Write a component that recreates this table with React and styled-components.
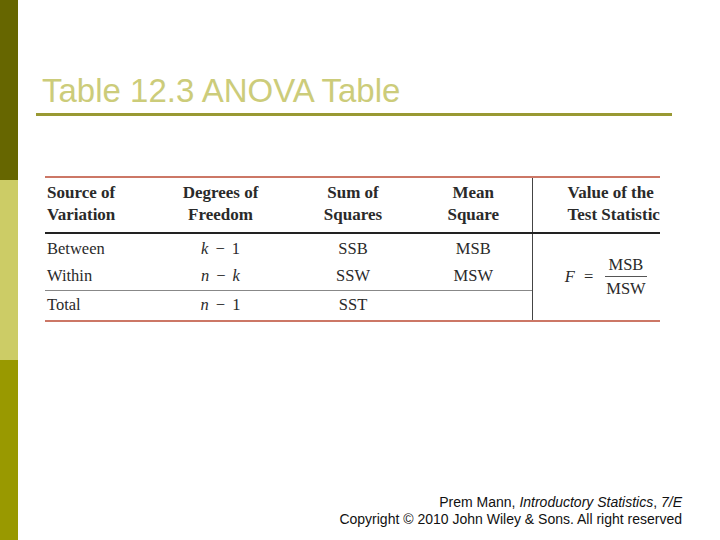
import React from 'react';
import styled, { createGlobalStyle } from 'styled-components';

const GlobalStyle = createGlobalStyle`
  html, body {
    margin: 0;
    padding: 0;
    background: #ffffff;
  }
  #root {
    width: 720px;
    height: 540px;
  }
`;

const Slide = styled.div`
  width: 720px;
  height: 540px;
  display: flex;
  background: #ffffff;
  overflow: hidden;
`;

const SideBar = styled.div`
  width: 18px;
  display: flex;
  flex-direction: column;
  flex-shrink: 0;
`;

const SideBlock = styled.div`
  height: 180px;
  background: ${(p) => p.$color};
`;

const Content = styled.div`
  box-sizing: border-box;
  width: 702px;
  display: flex;
  flex-direction: column;
  padding: 71px 48px 0 18px;
`;

const Title = styled.h1`
  margin: 0 0 0 6px;
  font-family: 'Liberation Sans', Arial, sans-serif;
  font-weight: normal;
  font-size: 33px;
  line-height: 40px;
  color: #cccc7a;
`;

const TitleRule = styled.div`
  height: 3px;
  margin: 2px 0 0 0;
  background: #999933;
`;

const TableWrap = styled.div`
  margin: 60px 0 0 9px;
  width: 615px;
`;

const Table = styled.table`
  width: 615px;
  table-layout: fixed;
  border-collapse: collapse;
  font-family: 'Liberation Serif', 'Times New Roman', serif;
  font-size: 16.5px;
  color: #2a2a2a;
  border-top: 2px solid #cc7766;
  border-bottom: 2px solid #cc7766;
`;

const Th = styled.th`
  box-sizing: border-box;
  font-weight: bold;
  font-size: 17px;
  line-height: 22px;
  padding: 4px 0 6px;
  text-align: ${(p) => p.$align || 'center'};
  padding-left: ${(p) => p.$pl || 0}px;
  border-bottom: 2px solid #222222;
  border-left: ${(p) => (p.$divider ? '1.5px solid #444444' : 'none')};
  width: ${(p) => p.$w}px;
  white-space: nowrap;
  overflow: visible;
`;

const Td = styled.td`
  box-sizing: border-box;
  text-align: ${(p) => p.$align || 'center'};
  padding: 0;
  padding-left: ${(p) => p.$pl || 0}px;
  height: ${(p) => p.$h}px;
  vertical-align: middle;
  border-top: ${(p) => (p.$rule ? '1px solid #888888' : 'none')};
  border-left: ${(p) => (p.$divider ? '1.5px solid #444444' : 'none')};
`;

const Ital = styled.span`
  font-style: italic;
`;

const Minus = styled.span`
  margin: 0 7px;
`;

const Formula = styled.div`
  display: flex;
  align-items: center;
  justify-content: center;
  gap: 9px;
  padding-left: 22px;
`;

const Fraction = styled.div`
  display: flex;
  flex-direction: column;
  align-items: center;
  line-height: 20px;
`;

const Numer = styled.span`
  padding: 0 4px 1px;
  border-bottom: 1px solid #555555;
`;

const Denom = styled.span`
  padding: 2px 4px 0;
`;

const Spacer = styled.div`
  flex: 1;
`;

const Footer = styled.div`
  align-self: flex-end;
  margin: 0 -10px 12px 0;
  text-align: right;
  font-family: 'Liberation Sans', Arial, sans-serif;
  font-size: 14px;
  line-height: 17px;
  color: #111111;
`;

const Expr = ({ a, b }) => (
  <>
    <Ital>{a}</Ital>
    <Minus>−</Minus>
    {b === 'k' ? <Ital>k</Ital> : b}
  </>
);

export default function App() {
  return (
    <>
      <GlobalStyle />
      <Slide>
        <SideBar>
          <SideBlock $color="#666600" />
          <SideBlock $color="#cccc66" />
          <SideBlock $color="#999900" />
        </SideBar>
        <Content>
          <Title>Table 12.3 ANOVA Table</Title>
          <TitleRule />
          <TableWrap>
            <Table>
              <thead>
                <tr>
                  <Th $align="left" $pl={2} $w={105}>
                    Source of
                    <br />
                    Variation
                  </Th>
                  <Th $w={141}>
                    Degrees of
                    <br />
                    Freedom
                  </Th>
                  <Th $w={124}>
                    Sum of
                    <br />
                    Squares
                  </Th>
                  <Th $w={117}>
                    Mean
                    <br />
                    Square
                  </Th>
                  <Th $divider $align="left" $pl={35} $w={128}>
                    Value of the
                    <br />
                    Test Statistic
                  </Th>
                </tr>
              </thead>
              <tbody>
                <tr>
                  <Td $align="left" $pl={2} $h={30}>Between</Td>
                  <Td $h={30}>
                    <Expr a="k" b="1" />
                  </Td>
                  <Td $h={30}>SSB</Td>
                  <Td $h={30}>MSB</Td>
                  <Td $divider rowSpan={3}>
                    <Formula>
                      <Ital>F</Ital>
                      <span>=</span>
                      <Fraction>
                        <Numer>MSB</Numer>
                        <Denom>MSW</Denom>
                      </Fraction>
                    </Formula>
                  </Td>
                </tr>
                <tr>
                  <Td $align="left" $pl={2} $h={27}>Within</Td>
                  <Td $h={27}>
                    <Expr a="n" b="k" />
                  </Td>
                  <Td $h={27}>SSW</Td>
                  <Td $h={27}>MSW</Td>
                </tr>
                <tr>
                  <Td $align="left" $pl={2} $h={31} $rule>Total</Td>
                  <Td $h={31} $rule>
                    <Expr a="n" b="1" />
                  </Td>
                  <Td $h={31} $rule>SST</Td>
                  <Td $h={31} $rule />
                </tr>
              </tbody>
            </Table>
          </TableWrap>
          <Spacer />
          <Footer>
            Prem Mann, <i>Introductory Statistics</i>, <i>7/E</i>
            <br />
            Copyright © 2010 John Wiley &amp; Sons. All right reserved
          </Footer>
        </Content>
      </Slide>
    </>
  );
}
